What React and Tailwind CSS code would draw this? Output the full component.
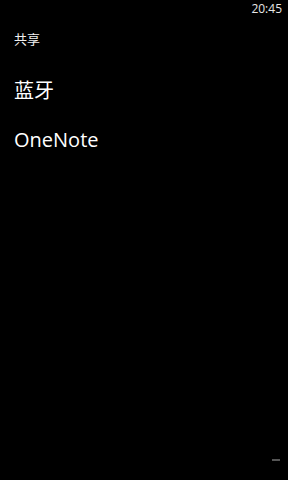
export default function App() {
  return (
    <div
      className="w-[288px] h-[480px] bg-black text-white flex flex-col overflow-hidden"
      style={{ fontFamily: '"Open Sans", "Noto Sans CJK SC", sans-serif' }}
    >
      {/* Status bar */}
      <div className="flex justify-end h-[19px] pr-[6px] pt-[1px]">
        <span className="text-[12px] leading-[16px] text-[#e6e6e6]">20:45</span>
      </div>

      {/* Title */}
      <div className="px-[14px] pt-[7px]">
        <span className="text-[13px] leading-[16px] text-[#f0f0f0]">共享</span>
      </div>

      {/* Items */}
      <div className="flex flex-col px-[14px] pt-[28px] gap-[23px]">
        <span className="text-[20px] leading-[26px]">蓝牙</span>
        <span className="text-[20px] leading-[26px]">OneNote</span>
      </div>

      <div className="flex-1" />

      {/* App bar ellipsis */}
      <div className="flex justify-end pr-[8px] pb-[19px]">
        <div className="w-[8px] h-[2px] bg-[#555]" />
      </div>
    </div>
  );
}
